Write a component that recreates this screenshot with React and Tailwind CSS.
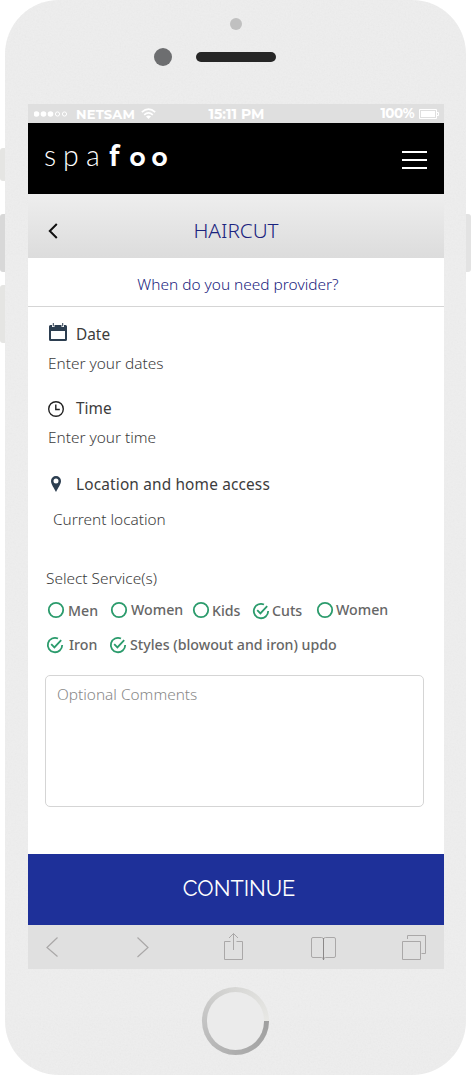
import React from "react";

const SANS = "font-['Noto_Sans','Open_Sans',sans-serif]";

function CheckCircle({ checked }) {
  return (
    <svg width="18" height="18" viewBox="0 0 18 18" fill="none" stroke="#2b9b6c" strokeWidth="1.8" className="-m-px shrink-0">
      {checked ? (
        <>
          <path d="M12 2.500A7.200 7.200 0 1 0 16.200 9" />
          <path d="M5.200 8.200 8.400 11.400 15.200 4.200" />
        </>
      ) : (
        <circle cx="9" cy="9" r="7.2" />
      )}
    </svg>
  );
}

function Service({ label, checked, box, text }) {
  return (
    <div className={`flex items-center ${box}`}>
      <CheckCircle checked={checked} />
      <span className={`whitespace-nowrap text-[14.2px] leading-5 font-medium text-[#666] ${text}`}>{label}</span>
    </div>
  );
}

function StatusBar() {
  return (
    <div className="grid h-[19px] grid-cols-3 items-center bg-[#dfdfdf] pl-[6px] pr-[5px] font-[Montserrat,Inter,sans-serif] text-[13px] font-bold leading-[19px] text-white">
      <div className="flex items-center">
        <svg width="34" height="6" viewBox="0 0 34 6" fill="#fff" className="shrink-0">
          <circle cx="2.5" cy="3" r="2.8" />
          <circle cx="9.5" cy="3" r="2.8" />
          <circle cx="16.5" cy="3" r="2.8" />
          <circle cx="23.5" cy="3" r="2.1" fill="none" stroke="#fff" />
          <circle cx="30.5" cy="3" r="2.1" fill="none" stroke="#fff" />
        </svg>
        <span className="ml-[8px] w-[60px] shrink-0 translate-y-px text-[13px] tracking-[0.2px]">NETSAM</span>
        <svg width="15" height="11" viewBox="0 0 15 11" fill="none" stroke="#fff" strokeWidth="1.6" className="ml-[5px] shrink-0">
          <path d="M.8 4.2Q7.5-1.9 14.2 4.2M3.2 6.8Q7.5 2.8 11.8 6.8" />
          <path d="M5 8.5Q7.5 6.3 10 8.5L7.5 11Z" fill="#fff" stroke="none" />
        </svg>
      </div>
      <span className="translate-y-px text-center text-[14px]">15:11 PM</span>
      <div className="flex items-center justify-end gap-[5px]">
        <span className="text-[13.5px] tracking-[-0.5px]">100%</span>
        <svg width="20" height="10" viewBox="0 0 20 10" fill="none" stroke="#fff" className="shrink-0">
          <path d="M.5.5H17.500V9.500H.5ZM17.500 3.500H19.500V6.500H17.500" />
          <path d="M2 2H16V8H2Z" fill="#fff" stroke="none" />
        </svg>
      </div>
    </div>
  );
}

function Header() {
  return (
    <div className="flex h-[71px] items-center justify-between bg-black pl-4 pr-[17px] text-white">
      <div className="-mt-[7px] flex h-[40px] items-baseline font-[Lato,sans-serif] text-[28.5px] leading-[40px]">
        <span className="w-[19px] font-light">s</span>
        <span className="w-[23px] font-light">p</span>
        <span className="w-[23px] font-light">a</span>
        <span className="w-[20.5px] font-[Raleway] text-[29px] font-bold">f</span>
        <span className="w-[22px] font-[Raleway] text-[26.5px] font-bold">o</span>
        <span className="font-[Raleway] text-[26.5px] font-bold">o</span>
      </div>
      <div className="mt-[3px] flex flex-col gap-[6px]">
        <div className="h-[2px] w-[25px] bg-white" />
        <div className="h-[2px] w-[25px] bg-white" />
        <div className="h-[2px] w-[25px] bg-white" />
      </div>
    </div>
  );
}

function TitleBar() {
  return (
    <div className="grid h-16 grid-cols-[40px_1fr_40px] items-center bg-linear-to-b from-[#eeeeee] to-[#dcdcdc] pt-[9px]">
      <svg width="10" height="16" viewBox="0 0 10 16" fill="none" stroke="#111" strokeWidth="2" className="ml-5 mt-px">
        <path d="M8.800 1 1.800 8 8.800 15" />
      </svg>
      <h1 className="mb-[2px] whitespace-nowrap text-center text-[20.7px] leading-6 font-light text-[#1a237e]">HAIRCUT</h1>
    </div>
  );
}

function Toolbar() {
  return (
    <div className="flex h-11 bg-[#e0e0e0]">
      <svg width="416" height="44" viewBox="0 0 416 44" fill="none" stroke="#aaa8a8" strokeWidth="1">
        <path d="M29.500 12.500 19 22.500 29.500 31.500M109.500 12.500 120 22.500 109.500 32" strokeWidth="1.200" />
        <path d="M202.500 16.500H196.500V34.500H214.500V16.500H208.500M205.500 25V8.500M201 13 205.500 8.500 210 13" />
        <path d="M295.500 14Q295 12.500 293.500 12.500H285Q283.500 12.500 283.500 14V31Q283.500 32.500 285 32.500H293.500Q295.500 32.500 295.500 35Q295.500 32.500 297.500 32.500H306Q307.500 32.500 307.500 31V14Q307.500 12.500 306 12.500H297.500Q296 12.500 295.500 14" />
        <path d="M295.500 13V35" stroke="#8b8888" />
        <path d="M374.500 16.500H392.500V34.500H374.500ZM379.500 14V10.500H397.500V28.500H393.500" />
      </svg>
    </div>
  );
}

function Screen() {
  return (
    <div className={`flex h-[865px] w-[416px] flex-col bg-white ${SANS}`}>
      <StatusBar />
      <Header />
      <TitleBar />
      <div className="h-[49px] border-b border-[#d5d5d5] pl-1 pt-[16px] text-center text-[15.45px] leading-5 font-light text-[#1a237e]">
        When do you need provider?
      </div>

      <div className="flex h-[547px] flex-col pl-[17px] pt-[18px] text-[15.4px] leading-5 text-[#3c3c3c]">
        <div className="flex h-5 items-center">
          <svg width="18" height="19" viewBox="0 0 18 19" fill="#2c3e50" className="-mt-[6px] ml-[4px] mr-[9px]">
            <path fillRule="evenodd" d="M0 3.500Q0 2 1.500 2H3V4H5.500V2H12.500V4H15V2H16.500Q18 2 18 3.500V16.500Q18 18 16.500 18H1.500Q0 18 0 16.500ZM2 8V16H16V8Z" />
            <path d="M3.800 0H4.800V3.200H3.800ZM13.200 0H14.200V3.200H13.200Z" />
          </svg>
          <span className="font-[450]">Date</span>
        </div>
        <div className="ml-[3px] mt-[9px] font-light">Enter your dates</div>

        <div className="mt-[25px] flex h-5 items-center">
          <svg width="18" height="18" viewBox="0 0 18 18" fill="none" stroke="#222" strokeWidth="1.400" className="ml-[2px] mr-[11px]">
            <circle cx="9" cy="9" r="7.300" />
            <path d="M8.800 4.500V9.500H12.800" />
          </svg>
          <span className="font-[450]">Time</span>
        </div>
        <div className="ml-[3px] mt-[9px] font-light">Enter your time</div>

        <div className="mt-[27px] flex h-5 items-center">
          <svg width="10" height="16" viewBox="0 0 10 16" fill="#2c3e50" className="-mt-[2px] ml-[6px] mr-[15px]">
            <path fillRule="evenodd" d="M5 0A5 5 0 0 1 10 5C10 8 7 12 5 16C3 12 0 8 0 5A5 5 0 0 1 5 0ZM5 2.500A2.500 2.500 0 1 0 5 7.500A2.500 2.500 0 1 0 5 2.500Z" />
          </svg>
          <span className="font-[450] tracking-[0.16px]">Location and home access</span>
        </div>
        <div className="ml-2 mt-[15px] font-light">Current location</div>

        <div className="ml-px mt-[39px] font-light">Select Service(s)</div>
        <div className="ml-[3px] mt-[11px] flex h-5 items-center">
          <Service label="Men" box="w-[63px]" text="ml-[4px] mt-[2px]" />
          <Service label="Women" box="w-[82px]" text="ml-[4px]" />
          <Service label="Kids" box="w-[60px]" text="ml-[3px] mt-[2px]" />
          <Service label="Cuts" checked box="w-[64px] mt-[2px]" text="ml-[3px]" />
          <Service label="Women" box="" text="ml-[3px]" />
        </div>
        <div className="ml-[2px] mt-[15px] flex h-5 items-center">
          <Service label="Iron" checked box="w-[63px]" text="ml-[6px]" />
          <Service label="Styles (blowout and iron) updo" checked box="" text="ml-[4px]" />
        </div>
        <textarea
          placeholder="Optional Comments"
          className="mt-5 h-[132px] w-[379px] resize-none rounded-[5px] border border-[#d5d5d5] px-[11px] py-[9px] text-[15.4px] leading-5 font-light outline-none placeholder:text-[#888]"
        />
      </div>

      <button className="h-[71px] bg-[#1e3099] pl-[6px] font-[Raleway,Lato,sans-serif] text-[21.7px] font-normal text-white">
        CONTINUE
      </button>
      <Toolbar />
    </div>
  );
}

export default function App() {
  return (
    <div className="relative h-[1075px] w-[471px] overflow-hidden bg-white">
      <div className="absolute left-0 top-[148px] h-[33px] w-3 rounded-l-[3px] bg-[#e5e5e3]" />
      <div className="absolute left-0 top-[214px] h-[58px] w-3 rounded-l-[3px] bg-[#d8d8d8]" />
      <div className="absolute left-0 top-[285px] h-[58px] w-3 rounded-l-[3px] bg-[#e5e5e3]" />
      <div className="absolute right-0 top-[214px] h-[58px] w-3 rounded-r-[3px] bg-[#e3e3e3]" />
      <div className="relative ml-[5px] flex h-[1075px] w-[461px] flex-col overflow-hidden rounded-[54px] bg-[#eeeeee]">
        <svg width="461" height="1075" className="pointer-events-none absolute inset-0 opacity-[0.06]">
          <filter id="grain" x="0" y="0" width="1" height="1">
            <feTurbulence type="fractalNoise" baseFrequency="0.6" numOctaves="2" seed="3" />
            <feColorMatrix type="saturate" values="0" />
          </filter>
          <rect width="461" height="1075" filter="url(#grain)" />
        </svg>
        <svg width="461" height="104" viewBox="0 0 461 104" className="relative shrink-0">
          <circle cx="231" cy="24" r="6" fill="#c0c0c0" />
          <circle cx="158" cy="57" r="9" fill="#6d6e70" />
          <rect x="191" y="52" width="80" height="10" rx="5" fill="#262626" />
        </svg>
        <div className="relative ml-[23px]">
          <Screen />
        </div>
        <div className="relative ml-[197px] mt-[18px] h-[68px] w-[67px] rounded-full bg-[conic-gradient(from_90deg,#9f9f9f,#aeaeae_25%,#c3c3c3_50%,#d5d5d3_72%,#e8e8e5)] p-[5px]">
          <div className="size-full rounded-full bg-[#ebebeb]" />
        </div>
      </div>
    </div>
  );
}
